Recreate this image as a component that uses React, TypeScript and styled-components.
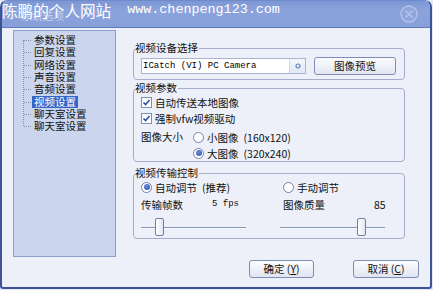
import styled, { createGlobalStyle } from 'styled-components';

const GlobalStyle = createGlobalStyle`
  html, body {
    margin: 0;
    padding: 0;
    background: #e4e9f5;
  }
  body {
    font-family: 'Noto Sans CJK SC', 'Noto Sans', sans-serif;
    font-size: 10.5px;
    color: #111;
  }
  * {
    box-sizing: border-box;
  }
`;

const Window = styled.div`
  position: relative;
  width: 432px;
  height: 289px;
  display: flex;
  flex-direction: column;
  border: 2px solid #3b5495;
  border-top: 1px solid #6f8bcc;
  border-radius: 7px 7px 3px 3px;
  overflow: hidden;
  background: #edf0f9;
`;

const TitleBar = styled.div`
  height: 27px;
  flex: none;
  display: flex;
  align-items: center;
  padding-left: 20px;
  background: linear-gradient(180deg, #7c96d4 0%, #8ba3db 35%, #88a0da 100%);
  border-bottom: 1px solid #5f7aba;
`;

const Title = styled.span`
  color: #c4cfee;
  font-size: 10.5px;
  flex: 1;
  padding-top: 2px;
`;

const CloseButton = styled.span`
  width: 18px;
  height: 18px;
  margin-right: 12px;
  display: flex;
`;

const Watermark = styled.div`
  position: absolute;
  top: 0;
  left: 0;
  display: flex;
  align-items: center;
  gap: 16px;
  color: #fff;
  line-height: 18px;
  pointer-events: none;
`;

const WatermarkName = styled.span`
  font-size: 15.6px;
`;

const WatermarkUrl = styled.span`
  font-family: 'Liberation Mono', monospace;
  font-size: 13.4px;
`;

const Body = styled.div`
  flex: 1;
  display: flex;
  flex-direction: column;
  padding: 2px 11px 0 11px;
`;

const Main = styled.div`
  display: flex;
  gap: 17px;
  height: 227px;
`;

const TreePanel = styled.div`
  width: 103px;
  background: #cbd6ee;
  border: 1px solid #8d9fcb;
  padding: 3px 0 0 9px;
`;

const TreeList = styled.ul`
  position: relative;
  list-style: none;
  margin: 0;
  padding: 0;

  &::before {
    content: '';
    position: absolute;
    left: 0;
    top: 6px;
    bottom: 6px;
    border-left: 1px dotted #8391b5;
  }
`;

const TreeItem = styled.li`
  position: relative;
  height: 12.3px;
  display: flex;
  align-items: center;
  padding-left: 9px;

  &::before {
    content: '';
    position: absolute;
    left: 1px;
    top: 50%;
    width: 7px;
    border-top: 1px dotted #8391b5;
  }
`;

const TreeLabel = styled.span<{ $selected?: boolean }>`
  padding: 0 2px;
  line-height: 12px;
  background: ${(p) => (p.$selected ? '#3565c6' : 'transparent')};
  color: ${(p) => (p.$selected ? '#fff' : '#111')};
`;

const Column = styled.div`
  width: 272px;
  padding-top: 12px;
  display: flex;
  flex-direction: column;
`;

const Group = styled.fieldset<{ $top?: number; $bottom?: number }>`
  margin: ${(p) => p.$top ?? 0}px 0 0;
  padding: 0 7px ${(p) => p.$bottom ?? 4}px;
  border: 1px solid #a3acc8;
  border-radius: 4px;
  min-width: 0;
`;

const Legend = styled.legend`
  padding: 0 1px 0 0;
  margin-left: -6px;
  font-size: 10.5px;
  line-height: 12px;
`;

const DeviceRow = styled.div`
  display: flex;
  align-items: center;
  gap: 8px;
  padding-top: 3px;
`;

const Combo = styled.div`
  width: 165px;
  height: 16px;
  display: flex;
  border: 1px solid #a9b5d0;
  background: #fff;
`;

const ComboText = styled.span`
  flex: 1;
  font-family: 'Liberation Mono', monospace;
  font-size: 9px;
  line-height: 14px;
  padding-left: 1px;
  color: #000;
`;

const ComboArrow = styled.span`
  width: 16px;
  display: flex;
  align-items: center;
  justify-content: center;
  border-left: 1px solid #cfd7e8;
  background: linear-gradient(180deg, #f3f6fc, #e2e8f4);
`;

const Button = styled.button<{ $width: number }>`
  width: ${(p) => p.$width}px;
  height: 18px;
  padding: 0;
  border: 1px solid #7f8db4;
  border-radius: 3px;
  background: linear-gradient(180deg, #fbfcfe 0%, #eef1f8 50%, #e0e5f1 100%);
  font-family: inherit;
  font-size: 10.5px;
  color: #111;
  line-height: 16px;
`;

const Row = styled.div<{ $height?: number }>`
  display: flex;
  align-items: center;
  gap: 3px;
  height: ${(p) => p.$height ?? 16}px;
`;

const CheckBox = styled.span`
  width: 11px;
  height: 11px;
  flex: none;
  display: flex;
  align-items: center;
  justify-content: center;
  border: 1px solid #7b8fb9;
  background: linear-gradient(180deg, #f4f6fb, #fff);
`;

const Radio = styled.span<{ $checked?: boolean }>`
  width: 11px;
  height: 11px;
  flex: none;
  border-radius: 50%;
  border: 1px solid #6f82ad;
  background: #fff;
  display: flex;
  align-items: center;
  justify-content: center;

  &::after {
    content: '';
    width: 6px;
    height: 6px;
    border-radius: 50%;
    background: ${(p) => (p.$checked ? 'radial-gradient(circle at 40% 35%, #6e8ee0, #2a4ba8)' : 'transparent')};
  }
`;

const SizeRow = styled.div`
  display: flex;
  margin-top: 3px;
`;

const SizeLabel = styled.span`
  width: 52px;
  line-height: 16px;
`;

const RadioStack = styled.div`
  display: flex;
  flex-direction: column;
`;

const Latin = styled.span`
  margin-left: 2px;
`;

const ControlGrid = styled.div`
  display: grid;
  grid-template-columns: 142px 1fr;
`;

const ValueLabel = styled.span<{ $width: number }>`
  display: inline-block;
  width: ${(p) => p.$width}px;
`;

const FpsValue = styled.span`
  font-family: 'Liberation Mono', monospace;
  font-size: 9px;
  margin-left: -3px;
`;

const SliderRow = styled.div`
  height: 25px;
  display: flex;
  align-items: center;
`;

const Slider = styled.div<{ $shift?: number }>`
  position: relative;
  width: 105px;
  height: 2px;
  margin: 4px 0 0 ${(p) => p.$shift ?? 0}px;
  border-top: 1px solid #8595bb;
  border-bottom: 1px solid #fafbfe;
`;

const Thumb = styled.span`
  position: absolute;
  top: -10px;
  width: 9px;
  height: 18px;
  border: 1px solid #6d7fab;
  border-radius: 2px;
  background: linear-gradient(90deg, #ffffff, #e1e6f3);
`;

const Footer = styled.div`
  display: flex;
  justify-content: flex-end;
  gap: 39px;
  padding-top: 3px;
`;

const treeItems = ['参数设置', '回复设置', '网络设置', '声音设置', '音频设置', '视频设置', '聊天室设置', '聊天室设置'];

const Check = () => (
  <CheckBox>
    <svg width="9" height="9" viewBox="0 0 9 9">
      <path d="M1.5 4.5 L3.6 6.6 L7.5 2" fill="none" stroke="#2b4c9c" strokeWidth="1.5" />
    </svg>
  </CheckBox>
);

const App = () => {
  return (
    <>
      <GlobalStyle />
      <Window>
        <TitleBar>
          <Title>系统选项</Title>
          <CloseButton>
            <svg width="18" height="18" viewBox="0 0 18 18">
              <circle cx="9" cy="9" r="8" fill="#90a7dd" stroke="#b4c2e6" strokeWidth="1.4" />
              <path d="M6 6 L12 12 M12 6 L6 12" stroke="#b8c5e8" strokeWidth="1.6" strokeLinecap="round" />
            </svg>
          </CloseButton>
        </TitleBar>
        <Watermark>
          <WatermarkName>陈鹏的个人网站</WatermarkName>
          <WatermarkUrl>www.chenpeng123.com</WatermarkUrl>
        </Watermark>
        <Body>
          <Main>
            <TreePanel>
              <TreeList>
                {treeItems.map((item, i) => (
                  <TreeItem key={i}>
                    <TreeLabel $selected={i === 5}>{item}</TreeLabel>
                  </TreeItem>
                ))}
              </TreeList>
            </TreePanel>
            <Column>
              <Group>
                <Legend>视频设备选择</Legend>
                <DeviceRow>
                  <Combo>
                    <ComboText>ICatch (VI) PC Camera</ComboText>
                    <ComboArrow>
                      <svg width="6" height="6" viewBox="0 0 6 6">
                        <circle cx="3" cy="3" r="2" fill="none" stroke="#5f7cbd" strokeWidth="1.2" />
                      </svg>
                    </ComboArrow>
                  </Combo>
                  <Button $width={82}>图像预览</Button>
                </DeviceRow>
              </Group>
              <Group $top={2} $bottom={0}>
                <Legend>视频参数</Legend>
                <Row>
                  <Check />
                  自动传送本地图像
                </Row>
                <Row>
                  <Check />
                  强制vfw视频驱动
                </Row>
                <SizeRow>
                  <SizeLabel>图像大小</SizeLabel>
                  <RadioStack>
                    <Row>
                      <Radio />
                      小图像<Latin>(160x120)</Latin>
                    </Row>
                    <Row>
                      <Radio $checked />
                      大图像<Latin>(320x240)</Latin>
                    </Row>
                  </RadioStack>
                </SizeRow>
              </Group>
              <Group $top={5} $bottom={0}>
                <Legend>视频传输控制</Legend>
                <ControlGrid>
                  <Row>
                    <Radio $checked />
                    自动调节<Latin>(推荐)</Latin>
                  </Row>
                  <Row>
                    <Radio />
                    手动调节
                  </Row>
                  <Row $height={18}>
                    <ValueLabel $width={71}>传输帧数</ValueLabel>
                    <FpsValue>5 fps</FpsValue>
                  </Row>
                  <Row $height={18}>
                    <ValueLabel $width={88}>图像质量</ValueLabel>
                    85
                  </Row>
                  <SliderRow>
                    <Slider>
                      <Thumb style={{ left: 14 }} />
                    </Slider>
                  </SliderRow>
                  <SliderRow>
                    <Slider $shift={-3}>
                      <Thumb style={{ left: 77 }} />
                    </Slider>
                  </SliderRow>
                </ControlGrid>
              </Group>
            </Column>
          </Main>
          <Footer>
            <Button $width={65}>
              确定 (<u>Y</u>)
            </Button>
            <Button $width={66}>
              取消 (<u>C</u>)
            </Button>
          </Footer>
        </Body>
      </Window>
    </>
  );
};

export default App;
